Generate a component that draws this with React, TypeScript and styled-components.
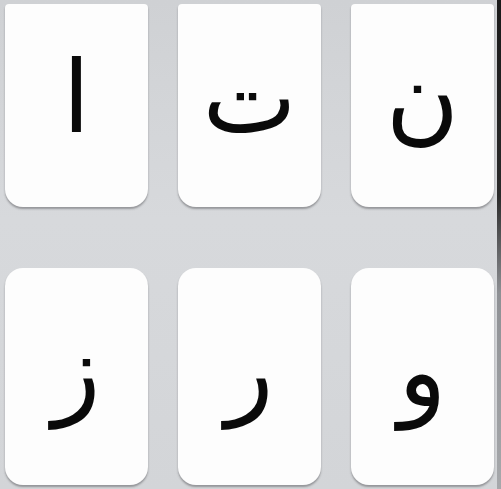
import React from "react";
import styled, { createGlobalStyle } from "styled-components";

const Global = createGlobalStyle`
  html, body { margin: 0; padding: 0; background: #d4d6d9; }
  body { width: 501px; height: 489px; overflow: hidden; }
`;

const Page = styled.div`
  display: flex;
  width: 501px;
  height: 489px;
  background: linear-gradient(180deg, #cfd1d4 0%, #d7d9dc 45%, #d3d5d8 100%);
`;

const Board = styled.div`
  flex: 1;
  display: grid;
  grid-template-columns: repeat(3, 143px);
  grid-template-rows: 203px 217px;
  column-gap: 30px;
  row-gap: 61px;
  padding: 4px 0 0 5px;
`;

const Edge = styled.div`
  width: 4px;
  background: linear-gradient(180deg, #1a1a1a 0%, #2a2a2a 40%, #8e9094 60%, #a6a8ab 100%);
`;

const Key = styled.div<{ $top?: boolean }>`
  display: flex;
  align-items: center;
  justify-content: center;
  background: #fdfdfd;
  border-radius: ${(p) => (p.$top ? "4px 4px 18px 18px" : "18px")};
  box-shadow: 0 2px 2px rgba(70, 72, 76, 0.45);
  font-family: "DejaVu Sans", "Noto Sans", sans-serif;
  font-size: 100px;
  line-height: 1;
  color: #0a0a0a;
`;

const Glyph = styled.span<{ $dy?: number }>`
  display: block;
  transform: translateY(${(p) => p.$dy ?? 0}px);
`;

const letters = [
  { ch: "ا", top: true },
  { ch: "ت", top: true },
  { ch: "ن", top: true },
  { ch: "ز", top: false },
  { ch: "ر", top: false },
  { ch: "و", top: false },
];

export default function App() {
  return (
    <>
      <Global />
      <Page>
        <Board>
          {letters.map((l) => (
            <Key key={l.ch} $top={l.top}>
              <Glyph dir="rtl" $dy={l.top ? -8 : -5}>
                {l.ch}
              </Glyph>
            </Key>
          ))}
        </Board>
        <Edge />
      </Page>
    </>
  );
}
